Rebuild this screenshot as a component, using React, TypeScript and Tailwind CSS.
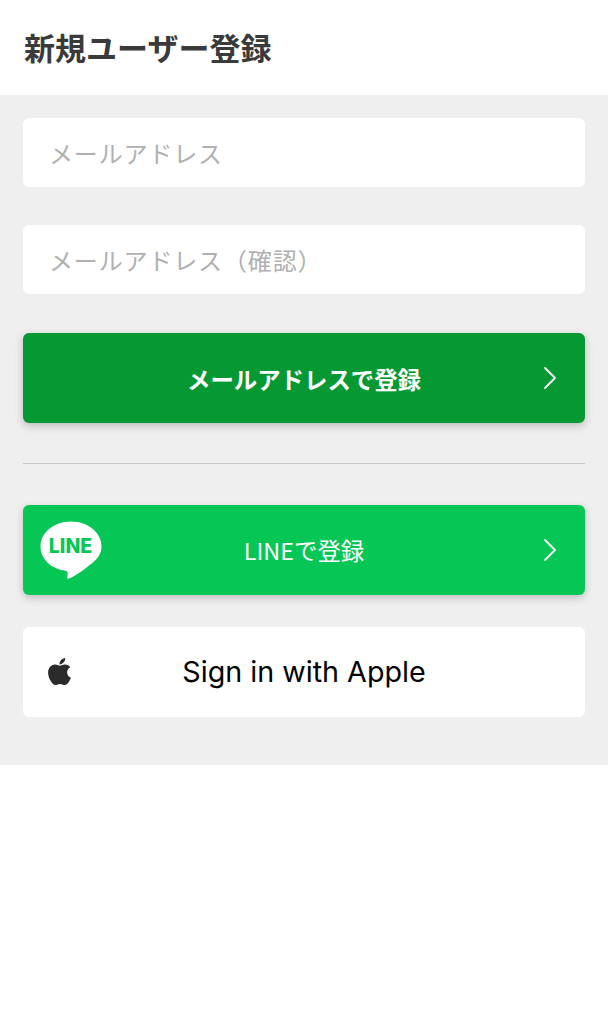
import { ChevronRight } from 'lucide-react'
import { FaApple } from 'react-icons/fa'

const jp = "font-['Noto_Sans_CJK_JP','Noto_Sans',sans-serif]"

function LineLogo() {
  return (
    <svg viewBox="0 0 62 58" className="h-[58px] w-[62px]" aria-hidden>
      <path
        d="M31 0.5C14 0.5 0.5 11.6 0.5 25.5C0.5 37.6 10.5 47.4 24.4 49.6C26.2 50 27.4 50.6 27.6 52C27.8 53.4 27.4 55.4 27.2 56.5C27.1 57.6 27.8 58 29 57.5C34 55.4 42 50.4 49 44.4C56.6 39.4 61.5 33 61.5 25.5C61.5 11.6 48 0.5 31 0.5Z"
        fill="#fff"
      />
      <text
        x="30.5"
        y="32"
        textAnchor="middle"
        fill="#06c755"
        fontSize="19.5"
        fontWeight="800"
        fontFamily="Inter, sans-serif"
      >
        LINE
      </text>
    </svg>
  )
}

function TextInput({ placeholder }: { placeholder: string }) {
  return (
    <div className="flex h-[69px] items-center rounded-md bg-white pl-[26px]">
      <span className="text-[24px] leading-none tracking-[0.85px] text-[#b0b0b0]">{placeholder}</span>
    </div>
  )
}

export default function App() {
  return (
    <div className={`min-h-[1024px] bg-white ${jp}`}>
      <header className="flex h-[95px] items-center px-6 pb-[2px]">
        <h1 className="text-[31px] font-bold leading-none text-[#3a3a3a]">新規ユーザー登録</h1>
      </header>

      <main className="bg-[#efefef] px-[23px] pb-[48px] pt-[23px]">
        <div className="flex flex-col gap-[38px]">
          <TextInput placeholder="メールアドレス" />
          <TextInput placeholder="メールアドレス（確認）" />
        </div>

        <button
          type="button"
          className="relative mt-[39px] flex h-[90px] w-full items-center justify-center rounded-md bg-[#069933] text-white shadow-[0_3px_8px_rgba(0,0,0,0.22)]"
        >
          <span className="pt-[3px] text-[23.4px] font-bold leading-none">メールアドレスで登録</span>
          <ChevronRight className="absolute right-[15px] top-[25px] size-[40px]" strokeWidth={1.1} aria-hidden />
        </button>

        <div className="mt-[40px] h-px bg-[#c9c9c9]" />

        <button
          type="button"
          className="relative mt-[41px] flex h-[90px] w-full items-center justify-center rounded-md bg-[#06c755] text-white shadow-[0_3px_8px_rgba(0,0,0,0.2)]"
        >
          <span className="absolute left-[17px] top-[16px]">
            <LineLogo />
          </span>
          <span className="pt-[1px] text-[23.4px] leading-none">LINEで登録</span>
          <ChevronRight className="absolute right-[15px] top-[25px] size-[40px]" strokeWidth={1.1} aria-hidden />
        </button>

        <button
          type="button"
          className="relative mt-[32px] flex h-[90px] w-full items-center justify-center rounded-md bg-white text-black"
        >
          <FaApple className="absolute left-[21px] top-[29px] size-[31px] text-[#2b2b2b]" aria-hidden />
          <span className="font-['Inter',sans-serif] text-[28.7px] leading-none">Sign in with Apple</span>
        </button>
      </main>
    </div>
  )
}
